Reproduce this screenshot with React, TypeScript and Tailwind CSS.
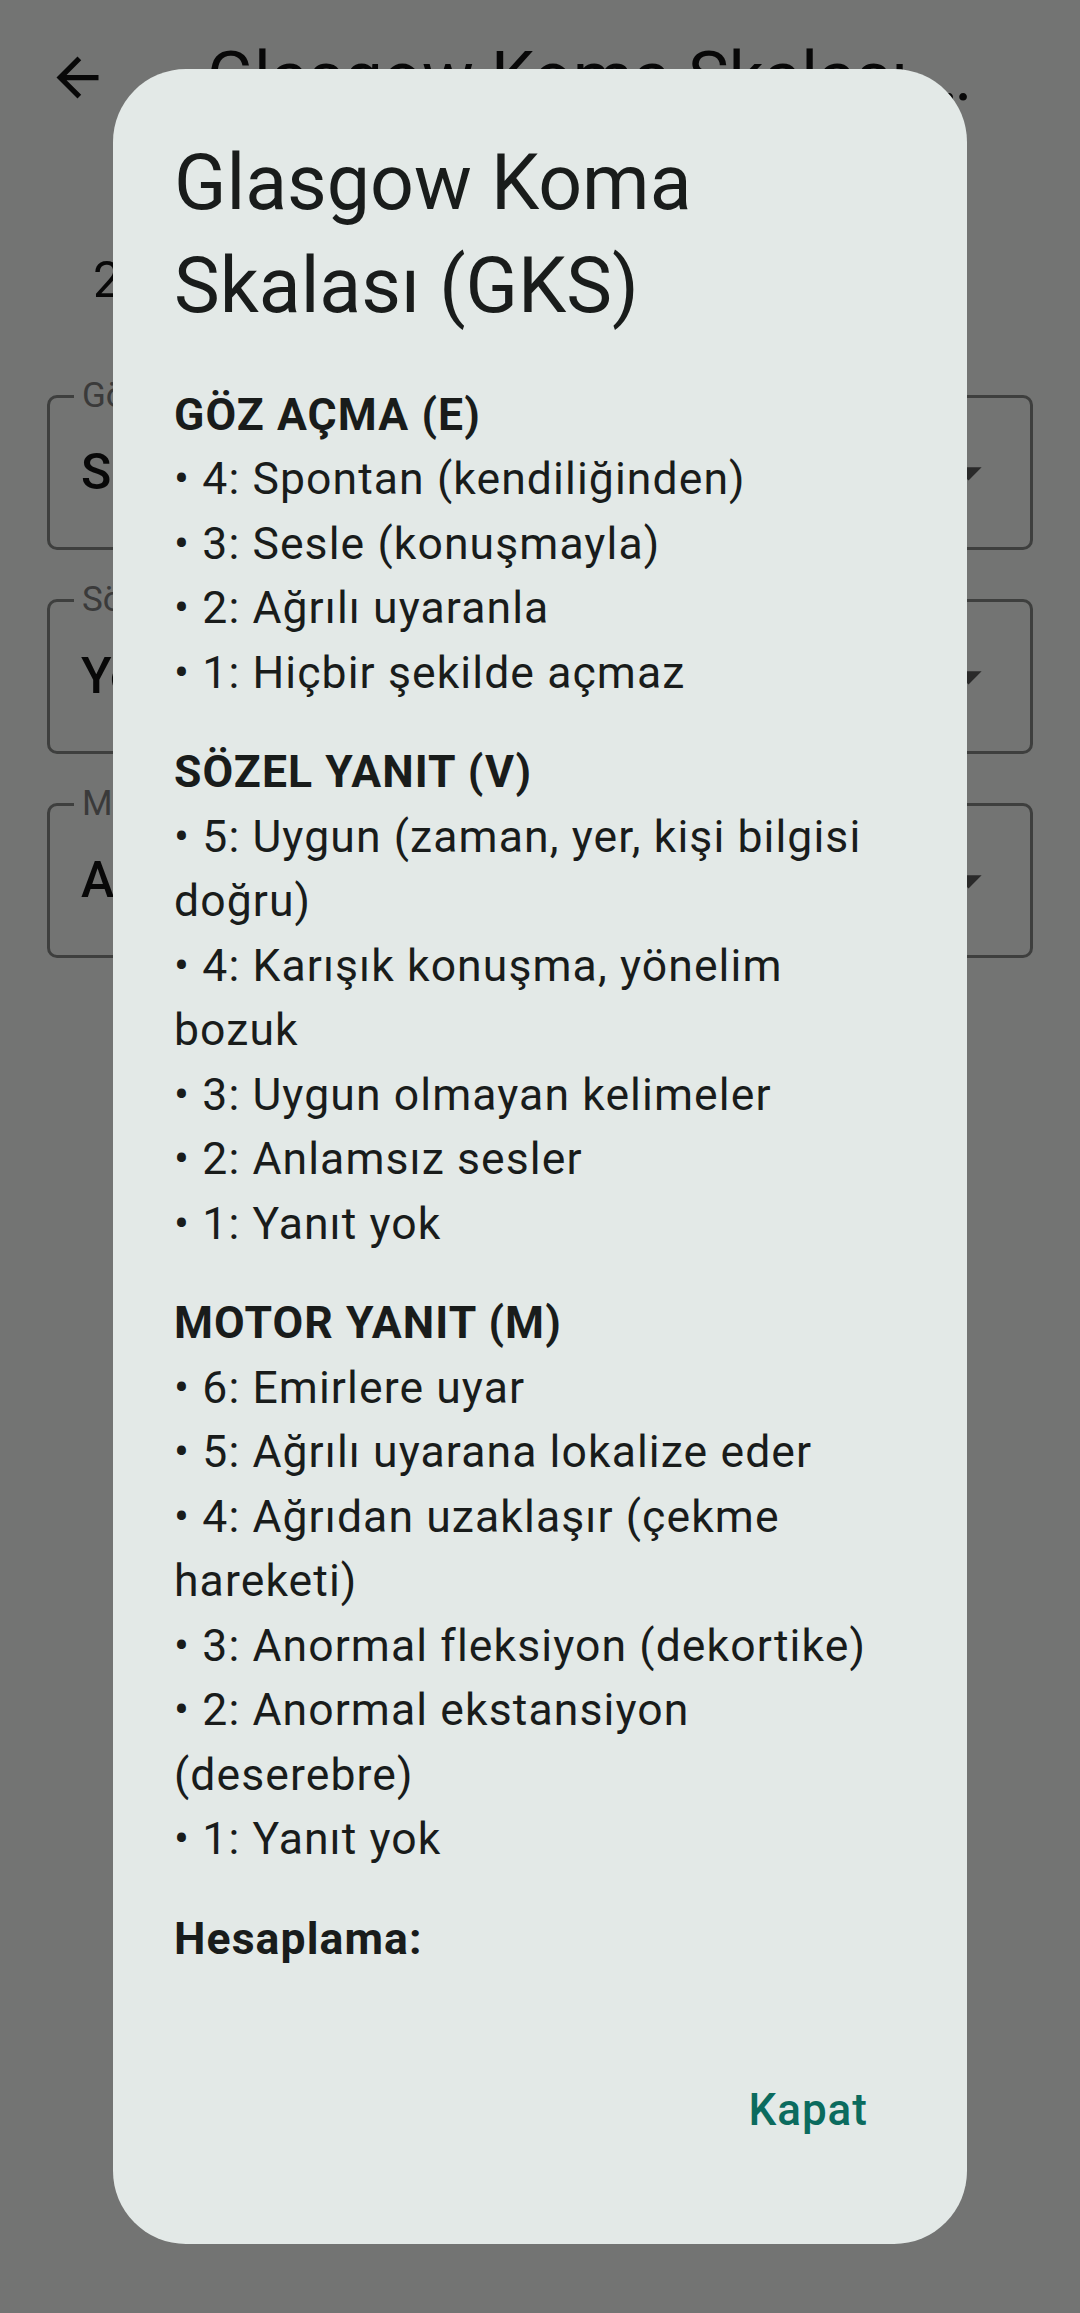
import { ReactNode } from 'react'

const sections: { title: string; items: string[] }[] = [
  {
    title: 'GÖZ AÇMA (E)',
    items: ['4: Spontan (kendiliğinden)', '3: Sesle (konuşmayla)', '2: Ağrılı uyaranla', '1: Hiçbir şekilde açmaz'],
  },
  {
    title: 'SÖZEL YANIT (V)',
    items: [
      '5: Uygun (zaman, yer, kişi bilgisi doğru)',
      '4: Karışık konuşma, yönelim bozuk',
      '3: Uygun olmayan kelimeler',
      '2: Anlamsız sesler',
      '1: Yanıt yok',
    ],
  },
  {
    title: 'MOTOR YANIT (M)',
    items: [
      '6: Emirlere uyar',
      '5: Ağrılı uyarana lokalize eder',
      '4: Ağrıdan uzaklaşır (çekme hareketi)',
      '3: Anormal fleksiyon (dekortike)',
      '2: Anormal ekstansiyon (deserebre)',
      '1: Yanıt yok',
    ],
  },
]

const fields = [
  { label: 'Göz Açma (E)', value: 'Spontan (4)' },
  { label: 'Sözel Yanıt (V)', value: 'Yönelimli (5)' },
  { label: 'Motor Yanıt (M)', value: 'Ağrıdan uzaklaşır (4)' },
]

function DropField({ label, value }: { label: string; value: string }) {
  return (
    <div className="relative h-[155px] rounded-[10px] border-[3px] border-[#7c7e7c] flex items-center pl-[31px] pr-[30px]">
      <span className="absolute -top-[22px] left-[24px] px-[8px] bg-[#e6e8e6] text-[35px] leading-[40px] text-[#757575]">
        {label}
      </span>
      <span className="flex-1 text-[50px] font-medium text-[#111]">{value}</span>
      <svg viewBox="0 0 24 24" className="w-[63px] h-[63px]" fill="#545454">
        <path d="M7 10l5 5 5-5z" />
      </svg>
    </div>
  )
}

function Line({ children, bold }: { children: ReactNode; bold?: boolean }) {
  return <p className={bold ? 'font-bold' : ''}>{children}</p>
}

export default function App() {
  return (
    <div className="relative w-[1080px] h-[2313px] overflow-hidden bg-[#e6e8e6] font-['Roboto',sans-serif]">
      {/* page behind the dialog */}
      <div className="flex items-center h-[154px] pl-[46px] pr-[90px]">
        <svg viewBox="0 0 24 24" className="w-[63px] h-[63px] shrink-0" fill="#111">
          <path d="M20 11H7.83l5.59-5.59L12 4l-8 8 8 8 1.41-1.41L7.83 13H20v-2z" />
        </svg>
        <h1 className="ml-[98px] truncate text-[69px] text-[#111]">Glasgow Koma Skalası (GKS) Hesaplama</h1>
      </div>
      <p className="pl-[93px] mt-[96px] text-[50px] leading-[60px] text-[#111]">2</p>
      <div className="mt-[85px] px-[47px] flex flex-col gap-[49px]">
        {fields.map((f) => (
          <DropField key={f.label} label={f.label} value={f.value} />
        ))}
      </div>

      {/* scrim + dialog */}
      <div className="absolute inset-0 bg-black/50 flex items-center justify-center">
        <div className="w-[854px] rounded-[73px] bg-[#e3e9e7] pt-[63px] pb-[82px] pl-[61px] pr-[63px] text-[#191c1b]">
          <h2 className="text-[77px] leading-[103px]">Glasgow Koma Skalası (GKS)</h2>
          <div className="mt-[45px] text-[44.5px] leading-[64.5px] tracking-[1.1px] flex flex-col gap-[35px]">
            {sections.map((s) => (
              <div key={s.title}>
                <Line bold>{s.title}</Line>
                {s.items.map((it) => (
                  <Line key={it}>• {it}</Line>
                ))}
              </div>
            ))}
            <Line bold>Hesaplama:</Line>
          </div>
          <div className="mt-[86px] flex justify-end">
            <button className="h-[105px] px-[36px] rounded-full text-[44px] tracking-[1px] font-medium text-[#0b6b5e]">
              Kapat
            </button>
          </div>
        </div>
      </div>
    </div>
  )
}
